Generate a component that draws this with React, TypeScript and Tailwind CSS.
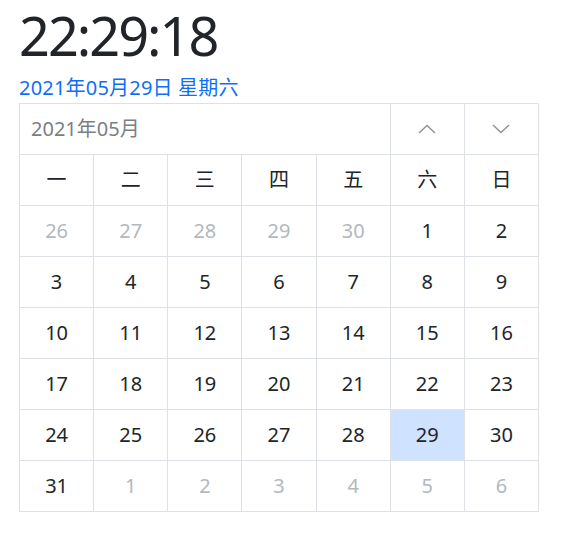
const weekdays = ['一', '二', '三', '四', '五', '六', '日'];

type Day = { n: number; muted?: boolean; active?: boolean };

const days: Day[] = [
  ...[26, 27, 28, 29, 30].map((n) => ({ n, muted: true })),
  ...Array.from({ length: 31 }, (_, i) => ({ n: i + 1, active: i + 1 === 29 })),
  ...[1, 2, 3, 4, 5, 6].map((n) => ({ n, muted: true })),
];

function Chevron({ up }: { up?: boolean }) {
  return (
    <svg width="18" height="10" viewBox="0 0 18 10" fill="none">
      <path
        d={up ? 'M1 9L9 1.5L17 9' : 'M1 1L9 8.5L17 1'}
        stroke="#8a8f96"
        strokeWidth="1.3"
      />
    </svg>
  );
}

export default function App() {
  return (
    <div className="min-h-[542px] bg-white px-[19px] font-['Noto_Sans','Noto_Sans_CJK_SC',sans-serif] text-[#212529]">
      <div className="pt-[1px] text-[54px] font-normal leading-[68px] tracking-[-2px]">22:29:18</div>
      <div className="mt-[3px] text-[20px] leading-[31px] tracking-[0.2px] text-[#0d6efd]">2021年05月29日 星期六</div>

      <div className="grid w-[520px] grid-cols-7 border-l border-t border-[#dee2e6]">
        <div className="col-span-5 flex h-[51px] items-center border-b border-r border-[#dee2e6] pl-[11px] text-[20px] text-[#7a7f85]">
          2021年05月
        </div>
        <div className="flex h-[51px] items-center justify-center border-b border-r border-[#dee2e6]">
          <Chevron up />
        </div>
        <div className="flex h-[51px] items-center justify-center border-b border-r border-[#dee2e6]">
          <Chevron />
        </div>

        {weekdays.map((w) => (
          <div
            key={w}
            className="flex h-[51px] items-center justify-center border-b border-r border-[#dee2e6] text-[20px]"
          >
            {w}
          </div>
        ))}

        {days.map((d, i) => (
          <div
            key={i}
            className={`flex h-[51px] items-center justify-center border-b border-r border-[#dee2e6] text-[20px] ${
              d.muted ? 'text-[#b3b8bd]' : ''
            } ${d.active ? 'bg-[#cfe2ff]' : ''}`}
          >
            {d.n}
          </div>
        ))}
      </div>
    </div>
  );
}
